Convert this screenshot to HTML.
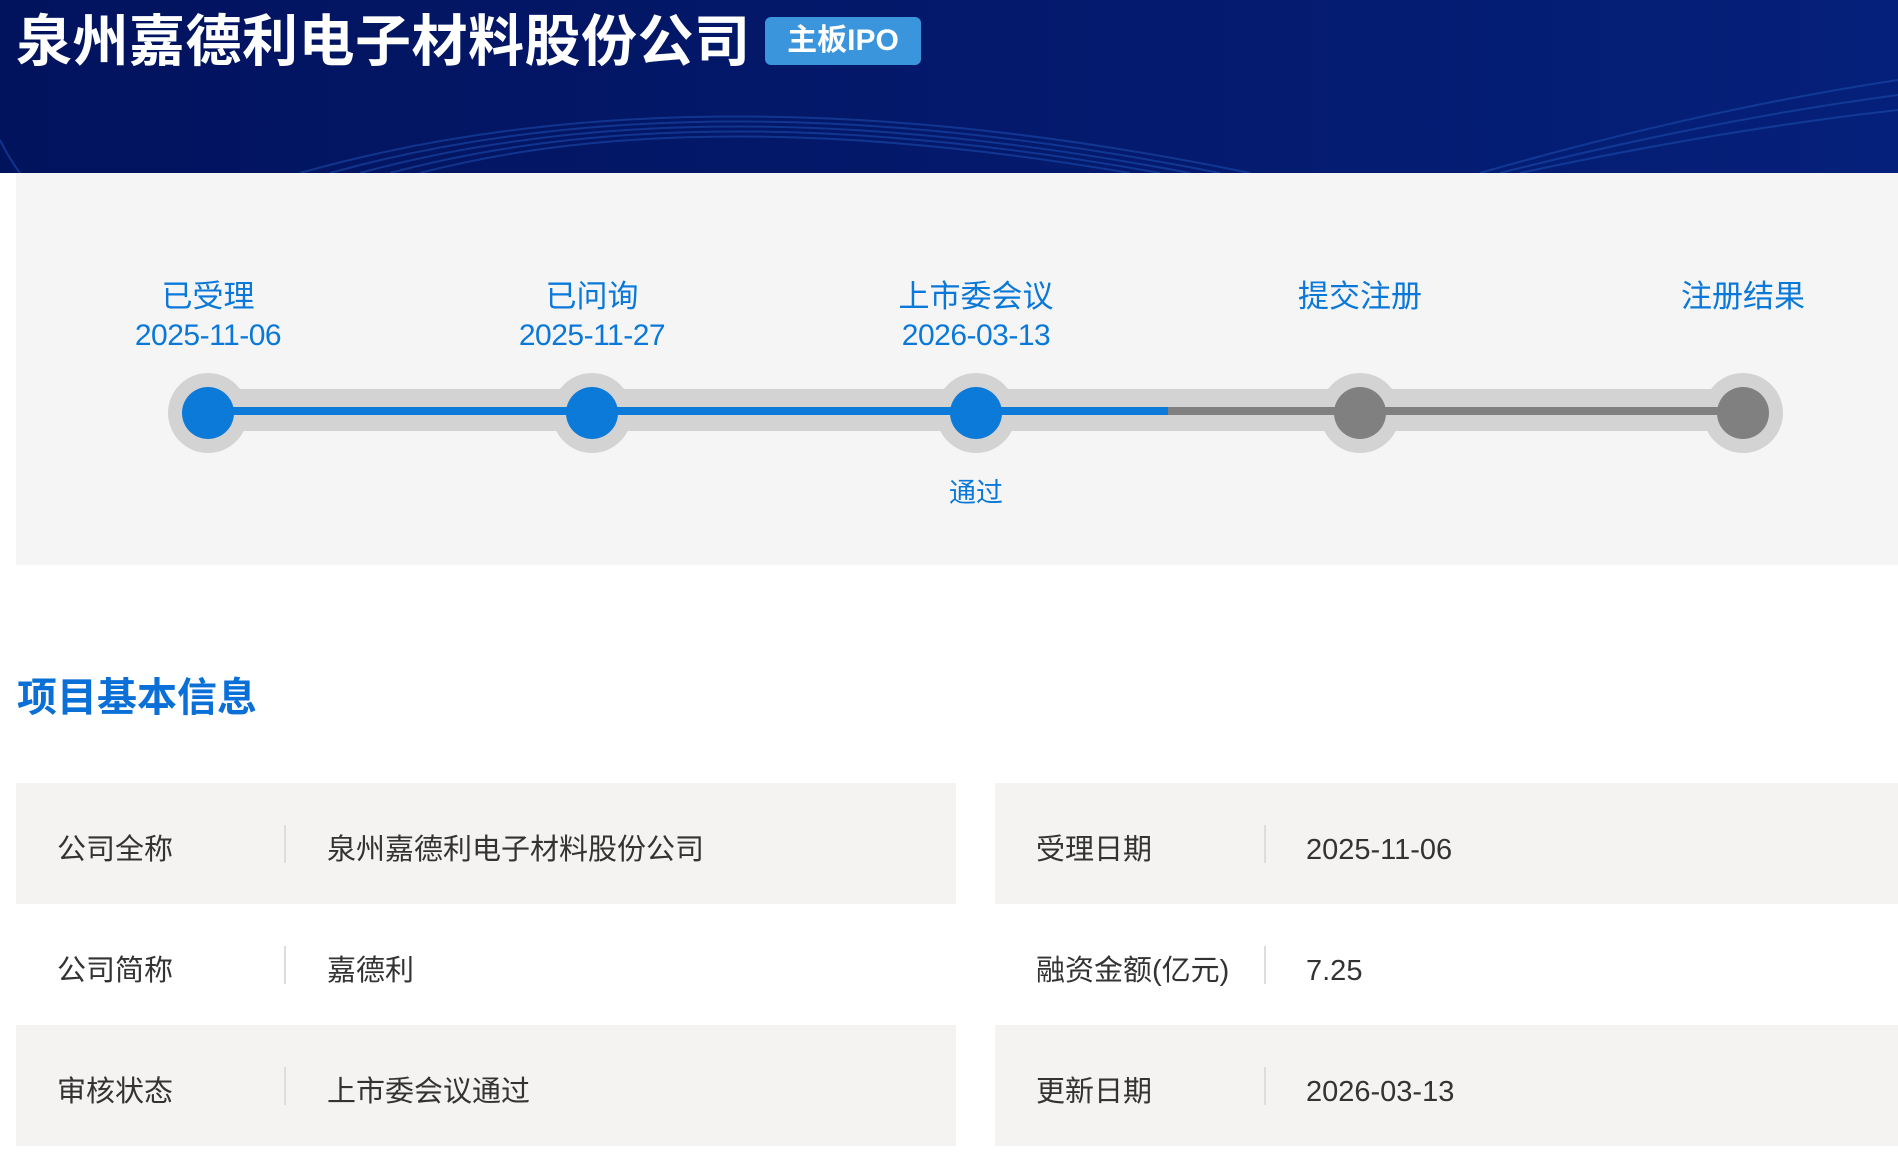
<!DOCTYPE html>
<html><head><meta charset="utf-8"><style>
*{margin:0;padding:0;box-sizing:border-box}
body{width:1898px;height:1142px;overflow:hidden;background:#fff;font-family:"Liberation Sans","Noto Sans CJK SC",sans-serif;position:relative}
.hdr{position:absolute;left:0;top:0;width:1898px;height:173px;background:linear-gradient(90deg,#02135e,#041a6e 60%,#05207a);overflow:hidden}
.t{position:absolute;left:16px;top:8px;font-size:56px;font-weight:bold;color:#fff;line-height:68px;letter-spacing:0.5px}
.badge{position:absolute;left:765px;top:17px;width:156px;height:48px;background:#3b95dd;border-radius:6px;color:#fff;font-size:30px;font-weight:bold;line-height:48px;text-align:center}
.panel{position:absolute;left:16px;top:173px;width:1882px;height:392px;background:#f5f5f5}
.abs{position:absolute}
.lbl{position:absolute;color:#0a78d8;font-size:31px;line-height:38px;text-align:center;width:300px;margin-left:-150px}
.lbl span{font-size:30px;letter-spacing:-0.5px}
.row{position:absolute;height:121px}
.g{background:#f4f3f2}
.c{position:absolute;font-size:29px;color:#333;line-height:121px;top:7px}
.d{position:absolute;top:42px;width:2px;height:38px;background:#ddd}
</style></head><body>
<div class="hdr">
<svg class="abs" style="left:0;top:0" width="1898" height="173">
<g fill="none" stroke="#1d4fb0" stroke-width="2" opacity=".55">
<path d="M330 173 Q700 70 1220 173"/><path d="M360 173 Q700 80 1190 173"/><path d="M390 173 Q700 90 1160 173"/><path d="M420 173 Q700 100 1130 173"/><path d="M300 173 Q700 60 1250 173"/>
<path d="M1480 173 Q1700 110 1898 80"/><path d="M1500 173 Q1710 120 1898 95"/><path d="M1520 173 Q1720 130 1898 110"/>
<path d="M0 140 Q10 160 20 173"/>
</g></svg>
<div class="t">泉州嘉德利电子材料股份公司</div>
<div class="badge">主板IPO</div>
</div>
<div class="panel"></div>
<svg class="abs" style="left:0;top:360px" width="1898" height="110">
<rect x="208" y="29" width="1535" height="42" fill="#d3d3d3"/>
<g fill="#d3d3d3"><circle cx="208" cy="53" r="40"/><circle cx="592" cy="53" r="40"/><circle cx="976" cy="53" r="40"/><circle cx="1360" cy="53" r="40"/><circle cx="1743" cy="53" r="40"/></g>
<rect x="208" y="47" width="960" height="8" fill="#0b7ad9"/>
<rect x="1168" y="47" width="575" height="8" fill="#808080"/>
<g fill="#0b7ad9"><circle cx="208" cy="53" r="26"/><circle cx="592" cy="53" r="26"/><circle cx="976" cy="53" r="26"/></g>
<g fill="#808080"><circle cx="1360" cy="53" r="26"/><circle cx="1743" cy="53" r="26"/></g>
</svg>
<div class="lbl" style="left:208px;top:278px">已受理<br><span>2025-11-06</span></div>
<div class="lbl" style="left:592px;top:278px">已问询<br><span>2025-11-27</span></div>
<div class="lbl" style="left:976px;top:278px">上市委会议<br><span>2026-03-13</span></div>
<div class="lbl" style="left:1360px;top:278px">提交注册</div>
<div class="lbl" style="left:1743px;top:278px">注册结果</div>
<div class="lbl" style="left:976px;top:474px;font-size:27px">通过</div>
<div class="abs" style="left:17px;top:674px;font-size:40px;font-weight:bold;color:#0a6fd6;line-height:48px">项目基本信息</div>

<div class="row g" style="left:16px;top:783px;width:940px"></div>
<div class="row g" style="left:995px;top:783px;width:903px"></div>
<div class="row g" style="left:16px;top:1025px;width:940px"></div>
<div class="row g" style="left:995px;top:1025px;width:903px"></div>

<div class="row" style="left:0;top:783px;width:1898px">
<div class="c" style="left:57px">公司全称</div><div class="d" style="left:284px"></div><div class="c" style="left:327px">泉州嘉德利电子材料股份公司</div>
<div class="c" style="left:1036px">受理日期</div><div class="d" style="left:1264px"></div><div class="c" style="left:1306px">2025-11-06</div></div>
<div class="row" style="left:0;top:904px;width:1898px">
<div class="c" style="left:57px">公司简称</div><div class="d" style="left:284px"></div><div class="c" style="left:327px">嘉德利</div>
<div class="c" style="left:1036px">融资金额(亿元)</div><div class="d" style="left:1264px"></div><div class="c" style="left:1306px">7.25</div></div>
<div class="row" style="left:0;top:1025px;width:1898px">
<div class="c" style="left:57px">审核状态</div><div class="d" style="left:284px"></div><div class="c" style="left:327px">上市委会议通过</div>
<div class="c" style="left:1036px">更新日期</div><div class="d" style="left:1264px"></div><div class="c" style="left:1306px">2026-03-13</div></div>
</body></html>
